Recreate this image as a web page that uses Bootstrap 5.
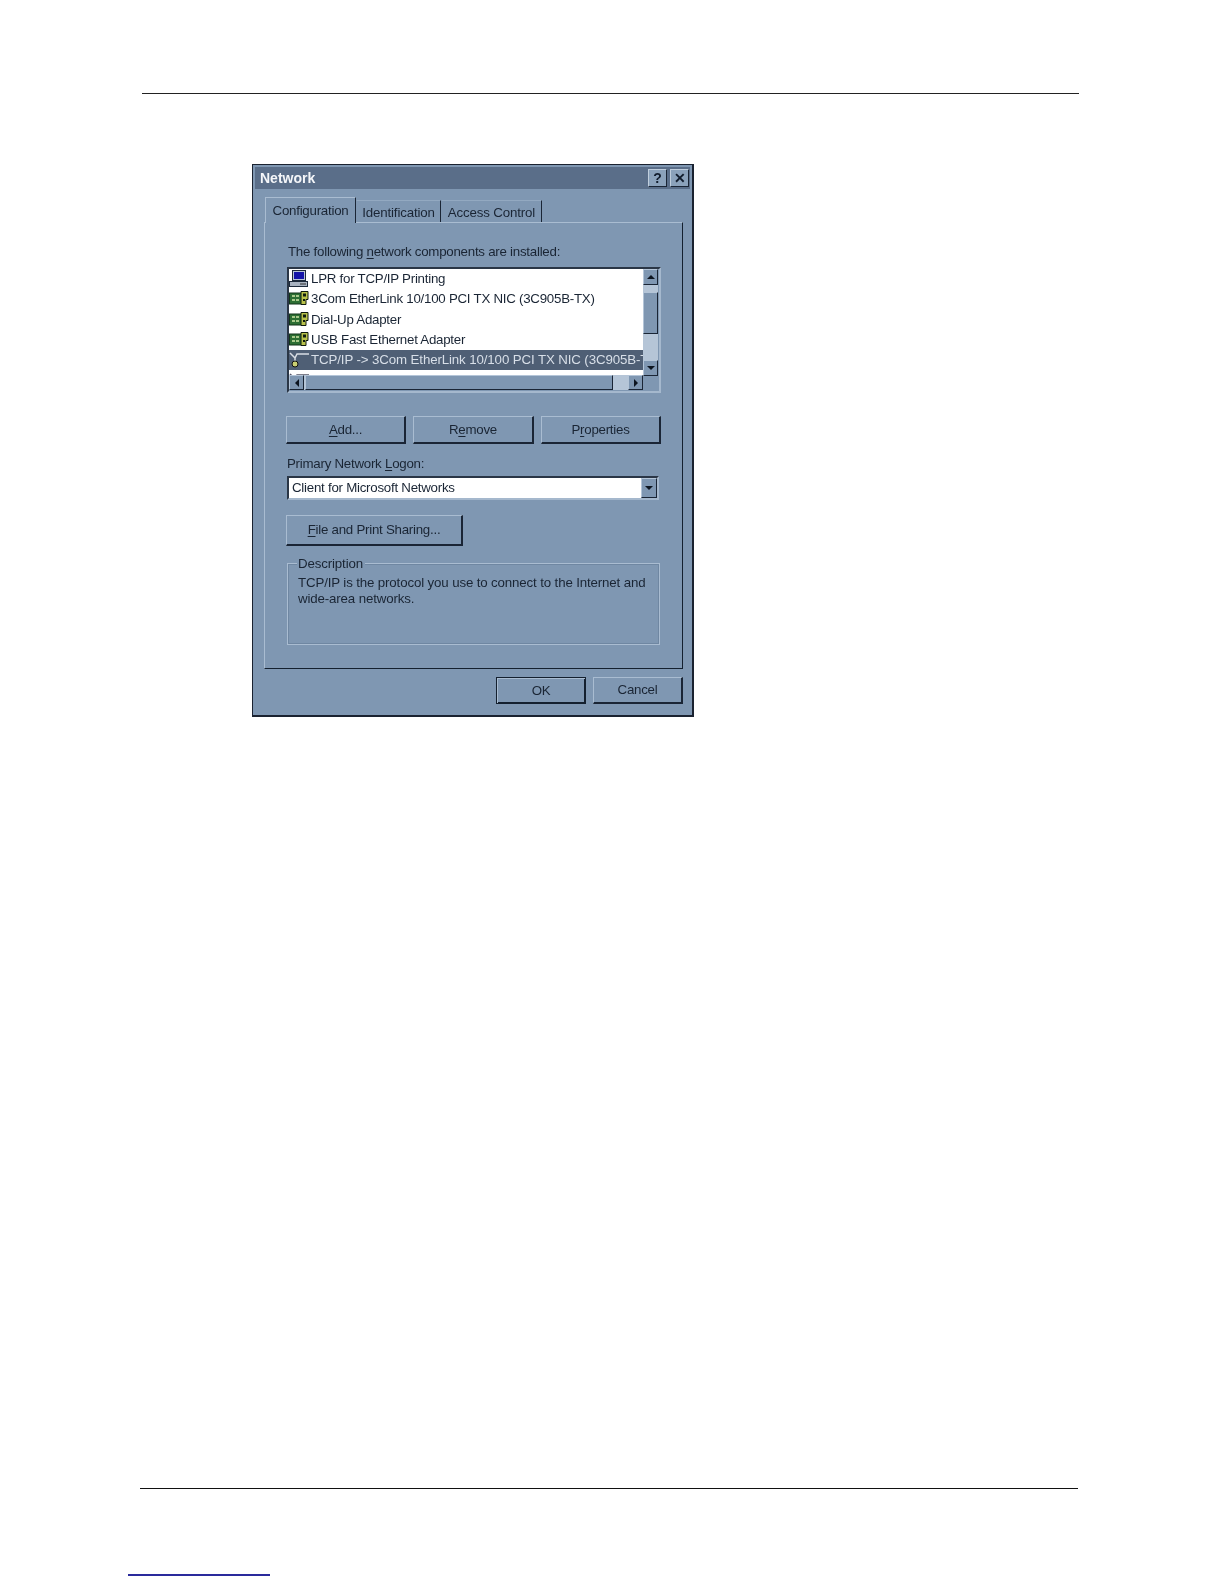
<!DOCTYPE html>
<html lang="en">
<head>
<meta charset="utf-8">
<title>Network</title>
<link href="https://cdn.jsdelivr.net/npm/bootstrap@5.3.0/dist/css/bootstrap.min.css" rel="stylesheet">
<style>
html,body{margin:0;background:#fff}
.sheet{height:1584px;width:1224px;overflow:hidden;position:relative}
.rule-top{height:1px;background:#222;margin:93px 145px 0 142px}
.rule-bottom{height:1px;background:#111;margin:0 146px 0 140px}
.rule-blue{height:2px;background:#2a2a9c;width:142px;margin:85px 0 0 128px}
.dlg{width:442px;height:553px;margin:70px 0 0 252px;background:#7f97b2;border:1px solid #1a2230;border-right-width:2px;border-bottom-width:2px;padding:2px;
 font-family:"Liberation Sans",Arial,sans-serif;font-size:13.3px;letter-spacing:-.25px;line-height:16px;color:#1a2534;filter:blur(.4px)}
.ttl{height:22px;background:#5a6e89;padding:0 1px 0 5px}
.cap{font-size:14px;font-weight:700;color:#f4f6f9;letter-spacing:0}
.wbtn{width:19px;height:18px;background:#8ba2bb;border:1px solid;border-color:#c0cedd #1a2535 #1a2535 #c0cedd;color:#111c2c;font-size:14px;line-height:16px;font-weight:700;text-align:center;letter-spacing:0}
.wgap{margin-left:3px}
.tabrow{height:34px;padding:9px 0 0 10px}
.tabx{background:#7f97b2;border:1px solid;border-color:transparent #1a2535 transparent #a9bcd1;border-bottom:0;padding:0;text-align:center}
.tabx.on{height:26px;width:91px;line-height:25px;position:relative;z-index:2;margin-top:-1px;border-top-color:#a9bcd1}
.tabx.off{height:22px;margin-top:2px;line-height:24px;border-left-color:#7f97b2;border-top-color:#93a9c1;letter-spacing:-.15px}
.t2{width:85px}.t3{width:101px}
.pane{width:419px;height:447px;margin-left:9px;border:1px solid;border-color:#a9bcd1 #14202f #14202f #a9bcd1;padding:21px 21px 0 23px;margin-top:-1px}
.lbl{height:16px}
.lbox{width:374px;height:126px;margin:7px 0 0 -1px;border:2px solid;border-color:#2a3646 #a5b8cd #a5b8cd #2a3646;background:#7f97b2}
.lrows{height:106px;width:354px;background:#fff;overflow:hidden}
.lrow{height:20.3px;line-height:20px;white-space:nowrap;color:#1a2534;display:flex;align-items:center}
.lrow svg{flex:none;width:20px;height:18px;margin-right:2px}
.lrow.sel{background:#4f5f75;color:#d8dfe8;letter-spacing:-.12px}
.vs{width:15px;height:106px;background:#b5c5d7}
.sbtn{background:#7f97b2;border:1px solid;border-color:#b4c5d8 #1a2535 #1a2535 #b4c5d8;display:flex;align-items:center;justify-content:center}
.vs .sbtn{height:16px}
.vthumb{height:42px;margin:7px 0 26px;background:#7f97b2;border:1px solid;border-color:#b4c5d8 #1a2535 #1a2535 #b4c5d8}
.hs{height:15px;width:354px;background:#b5c5d7}
.hs .sbtn{width:15px;height:15px}
.hthumb{width:308px;height:15px;margin-left:1px;background:#7f97b2;border:1px solid;border-color:#b4c5d8 #1a2535 #1a2535 #b4c5d8}
.tri-u{width:0;height:0;border:4px solid transparent;border-top:0;border-bottom:4px solid #0d1520}
.tri-d{width:0;height:0;border:4px solid transparent;border-bottom:0;border-top:4px solid #0d1520}
.tri-l{width:0;height:0;border:4px solid transparent;border-left:0;border-right:4px solid #0d1520}
.tri-r{width:0;height:0;border:4px solid transparent;border-right:0;border-left:4px solid #0d1520}
.wb{background:#7f97b2;border:1px solid;border-color:#a9bcd1 #1a2535 #1a2535 #a9bcd1;border-right-width:2px;border-bottom-width:2px;border-radius:0;color:#1a2534;font-size:13.3px;letter-spacing:-.25px;line-height:16px;padding:0;--bs-btn-hover-bg:#7f97b2}
.row-btns{margin-top:23px;margin-left:-2px;width:375px}
.b1{width:120px;height:28px}.b2{width:121px;height:28px;margin-left:7px}.b3{width:120px;height:28px;margin-left:7px}
.lbl2{margin-top:12px;margin-left:-1px}
.combo{width:372px;height:24px;margin:4px 0 0 -1px;border:2px solid;border-color:#2a3646 #a5b8cd #a5b8cd #2a3646;background:#fff;padding-left:3px;line-height:20px}
.combo .sbtn{width:16px;height:20px;margin-left:auto}
.b4{width:177px;height:31px;display:block;margin:15px 0 0 -2px}
.grp{width:373px;height:82px;margin:17px 0 0 -1px;border:1px solid #a9bcd1;position:relative;padding:11px 10px 0 10px;line-height:15.5px;letter-spacing:-.14px;outline:1px solid #6f87a2;outline-offset:-2px}
.lgd{position:absolute;left:9px;top:-8px;background:#7f97b2;padding:0 2px 0 1px}
.foot{padding:8px 0 0 241px}
.b5{width:90px;height:27px;border:1px solid #14202f;box-shadow:inset 1px 1px 0 #a9bcd1,inset -1px -1px 0 #14202f}
.b6{width:90px;height:27px;margin-left:7px}
u{text-underline-offset:2px}
</style>
</head>
<body>
<svg width="0" height="0" class="d-none"><defs>
<g id="nic"><rect x="0.5" y="3" width="14" height="11" fill="#2c6e33" stroke="#12351a"/><rect x="3" y="5" width="3" height="2" fill="#a8c98a"/><rect x="7" y="5" width="3" height="2" fill="#a8c98a"/><rect x="3" y="9" width="3" height="2" fill="#a8c98a"/><rect x="7" y="9" width="3" height="2" fill="#a8c98a"/><path d="M12 1.5h7v8h-2v5h-5z" fill="#b9c24a" stroke="#0f1a10"/><rect x="14" y="3.500" width="3" height="3" fill="#0f1a10"/><rect x="14" y="9" width="2" height="2" fill="#0f1a10"/></g>
</defs></svg>
<div class="sheet d-flex flex-column">
  <div class="rule-top"></div>
  <div class="dlg">
    <div class="ttl d-flex align-items-center">
      <span class="cap flex-grow-1">Network</span>
      <div class="wbtn">?</div>
      <div class="wbtn wgap">&#10005;</div>
    </div>
    <div class="tabrow d-flex">
      <div class="tabx on">Configuration</div>
      <div class="tabx off t2">Identification</div>
      <div class="tabx off t3">Access Control</div>
    </div>
    <div class="pane">
      <div class="lbl">The following <u>n</u>etwork components are installed:</div>
      <div class="lbox">
        <div class="d-flex">
          <div class="lrows">
            <div class="lrow"><svg viewBox="0 0 20 18"><rect x="3.500" y="0.500" width="13" height="10" fill="#b9c6d6" stroke="#1d2a3a"/><rect x="5" y="2" width="10" height="7" fill="#1414a8"/><rect x="0.500" y="11.500" width="18" height="5" fill="#a9b3c0" stroke="#1d2a3a"/><rect x="11" y="13.500" width="6" height="1" fill="#333"/></svg>LPR for TCP/IP Printing</div>
            <div class="lrow"><svg viewBox="0 0 20 18"><use href="#nic"/></svg>3Com EtherLink 10/100 PCI TX NIC (3C905B-TX)</div>
            <div class="lrow"><svg viewBox="0 0 20 18"><use href="#nic"/></svg>Dial-Up Adapter</div>
            <div class="lrow"><svg viewBox="0 0 20 18"><use href="#nic"/></svg>USB Fast Ethernet Adapter</div>
            <div class="lrow sel"><svg viewBox="0 0 20 18"><path d="M1 2l5 5 2-4h12M6 7v4" fill="none" stroke="#d9dee5" stroke-width="1.500"/><circle cx="6" cy="13" r="3" fill="#c9cf72" stroke="#111"/></svg>TCP/IP -&gt; 3Com EtherLink 10/100 PCI TX NIC (3C905B-TX)</div>
            <div class="lrow"><svg viewBox="0 0 20 18"><path d="M1 2l5 5 2-4h12" fill="none" stroke="#556" stroke-width="1.500"/></svg></div>
          </div>
          <div class="vs">
            <div class="sbtn"><i class="tri-u"></i></div>
            <div class="vthumb"></div>
            <div class="sbtn"><i class="tri-d"></i></div>
          </div>
        </div>
        <div class="hs d-flex">
          <div class="sbtn"><i class="tri-l"></i></div>
          <div class="hthumb"></div>
          <div class="sbtn ms-auto"><i class="tri-r"></i></div>
        </div>
      </div>
      <div class="d-flex row-btns">
        <button class="btn wb b1"><u>A</u>dd...</button>
        <button class="btn wb b2">R<u>e</u>move</button>
        <button class="btn wb b3">P<u>r</u>operties</button>
      </div>
      <div class="lbl2">Primary Network <u>L</u>ogon:</div>
      <div class="combo d-flex">
        <span>Client for Microsoft Networks</span>
        <div class="sbtn"><i class="tri-d"></i></div>
      </div>
      <button class="btn wb b4"><u>F</u>ile and Print Sharing...</button>
      <div class="grp">
        <span class="lgd">Description</span>
        TCP/IP is the protocol you use to connect to the Internet and wide-area networks.
      </div>
    </div>
    <div class="foot d-flex">
      <button class="btn wb b5">OK</button>
      <button class="btn wb b6">Cancel</button>
    </div>
  </div>
  <div class="flex-grow-1"></div>
  <div class="rule-bottom"></div>
  <div class="rule-blue"></div>
  <div style="height:8px"></div>
</div>
<script src="https://cdn.jsdelivr.net/npm/bootstrap@5.3.0/dist/js/bootstrap.bundle.min.js"></script>
</body>
</html>
